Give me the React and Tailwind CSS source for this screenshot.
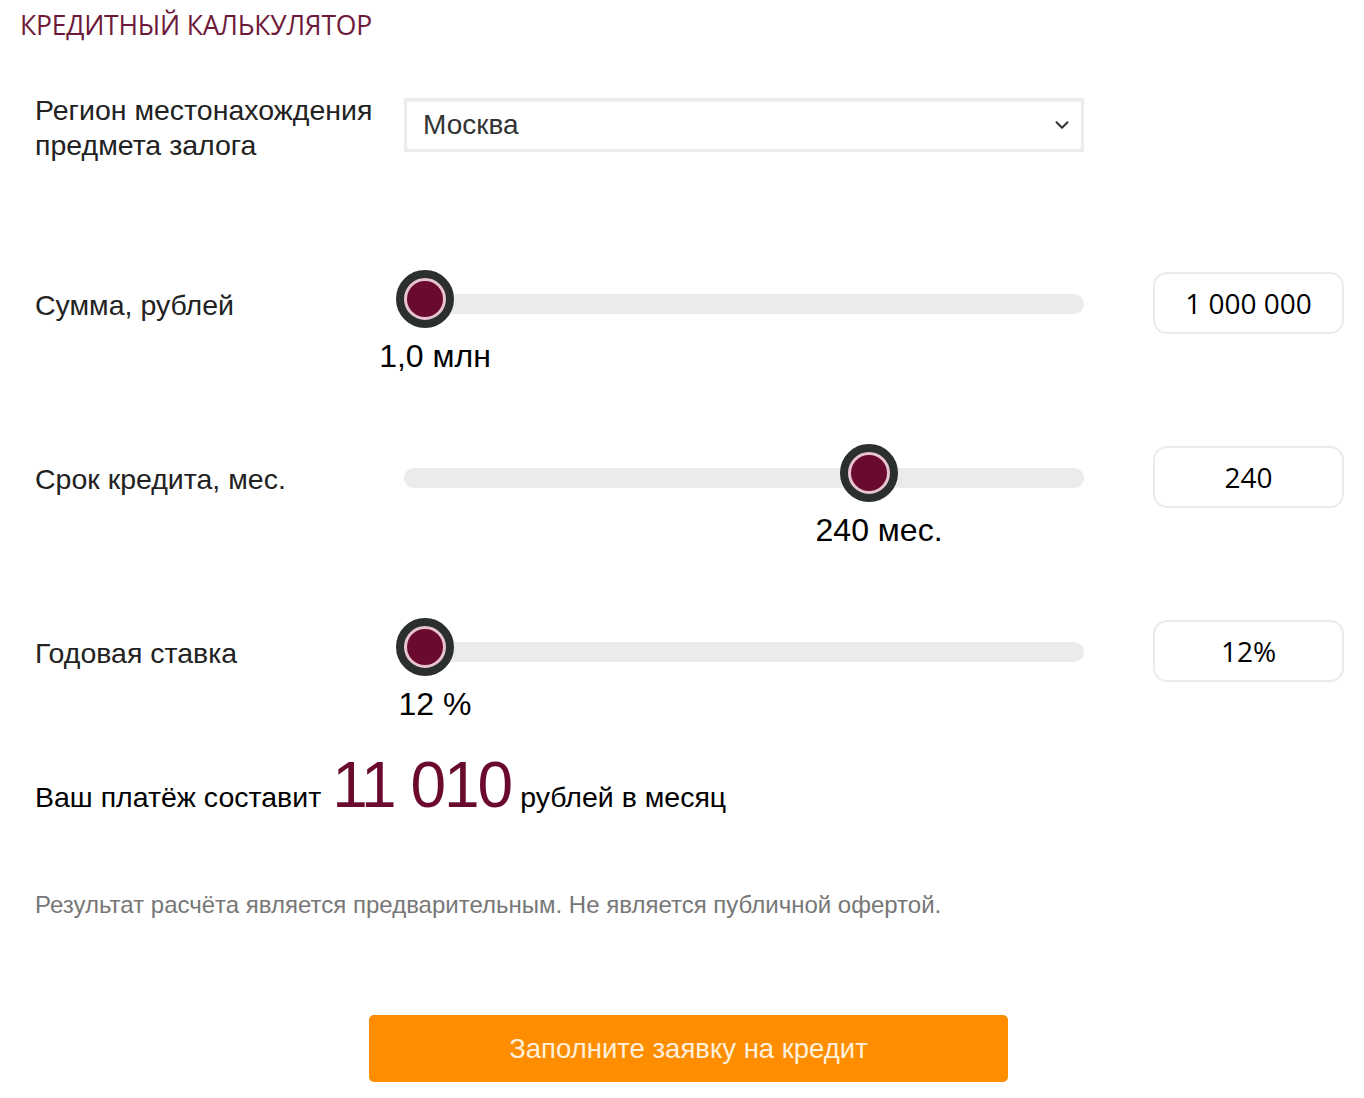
import { ChevronDown } from 'lucide-react';

const rows = [
  { label: 'Сумма, рублей', pos: 0, value: '1,0 млн', input: '1 000 000' },
  { label: 'Срок кредита, мес.', pos: 0.696, value: '240 мес.', input: '240' },
  { label: 'Годовая ставка', pos: 0, value: '12 %', input: '12%' }
];

function Slider({ pos, value }) {
  // thumb centre travels from 21px to (width - 21px)
  return (
    <div className="relative h-[174px] w-[680px]">
      <div className="absolute left-0 right-0 top-[24px] h-5 rounded-full bg-[#ebebeb]" />
      <div
        className="absolute top-0 flex w-[74px] flex-col items-center"
        style={{ left: `calc(${pos} * (100% - 42px) - 16px)` }}
      >
        <div className="h-[58px] w-[58px] rounded-full border-[8px] border-[#2b2f2f] bg-[#e8c3d0] p-[3px]">
          <div className="h-full w-full rounded-full bg-[#6a0a2e]" />
        </div>
      </div>
      <div
        className="absolute top-[67px] w-[200px] text-center text-[32px] leading-[38px] text-black"
        style={{ left: `calc(${pos} * (100% - 42px) - 69px)` }}
      >
        {value}
      </div>
    </div>
  );
}

export default function App() {
  return (
    <div className="min-h-[1098px] w-[1364px] bg-white pt-[8px] font-['Liberation_Sans',Arial,sans-serif]">
      <h1 className="pl-[20px] font-['Open_Sans',sans-serif] text-[26.5px] leading-[35px] tracking-[-0.2px] text-[#6d1a3a]">
        КРЕДИТНЫЙ КАЛЬКУЛЯТОР
      </h1>

      <div className="mt-[50px] flex items-start pl-[35px]">
        <div className="w-[369px] text-[28.5px] leading-[35px] text-[#222]">
          Регион местонахождения
          <br />
          предмета залога
        </div>
        <div className="mt-[5px] flex h-[54px] w-[680px] items-center justify-between border-[3px] border-[#ececec] bg-white pl-[16px] pr-[8px] shadow-[inset_0_1px_2px_rgba(0,0,0,0.05)]">
          <span className="text-[28px] text-[#333]">Москва</span>
          <ChevronDown size={22} strokeWidth={2.2} className="text-[#333]" />
        </div>
      </div>

      <div className="mt-[107px] flex flex-col pl-[35px]">
        {rows.map((r) => (
          <div key={r.label} className="flex items-start">
            <div className="mt-[18px] w-[369px] text-[28.5px] leading-[35px] text-[#222]">{r.label}</div>
            <Slider pos={r.pos} value={r.value} />
            <div className="ml-[69px] mt-[2px] flex h-[62px] w-[191px] items-center justify-center rounded-[14px] border-2 border-[#ebebeb] font-['Open_Sans',sans-serif] text-[28px] text-black">
              {r.input}
            </div>
          </div>
        ))}
      </div>

      <div className="-mt-[39px] flex items-baseline pl-[35px] text-[28.5px] text-black">
        <span>Ваш платёж составит</span>
        <span className="ml-[11px] mr-[9px] text-[64px] leading-[64px] tracking-[-2px] text-[#6a0a2e]">11 010</span>
        <span>рублей в месяц</span>
      </div>

      <p className="mt-[71px] pl-[35px] text-[24px] leading-[30px] text-[#777]">
        Результат расчёта является предварительным. Не является публичной офертой.
      </p>

      <div className="mt-[95px] pl-[369px]">
        <button className="h-[67px] w-[639px] rounded-[5px] bg-[#ff8d00] text-[27.5px] text-[#fff0dc]">
          Заполните заявку на кредит
        </button>
      </div>
    </div>
  );
}
